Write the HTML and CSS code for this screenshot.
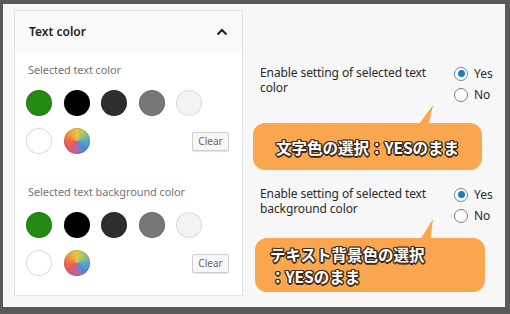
FILE: index.html
```html
<!DOCTYPE html>
<html lang="ja">
<head>
<meta charset="utf-8">
<link rel="stylesheet" href="styles.css">
</head>
<body>
<div class="frame">
  <div class="inner">
    <section class="panel">
      <div class="panel-head">
        <span class="panel-title">Text color</span>
        <svg class="chev" width="12" height="8" viewBox="0 0 12 8"><polyline points="1.5,6.5 6,2 10.5,6.5" fill="none" stroke="#1e1e1e" stroke-width="2"/></svg>
      </div>
      <div class="panel-body">
        <div class="group">
          <div class="label">Selected text color</div>
          <div class="row">
            <span class="sw green"></span><span class="sw black"></span><span class="sw dark"></span><span class="sw gray"></span><span class="sw light"></span>
          </div>
          <div class="row">
            <span class="sw white"></span><span class="sw grad"></span>
            <button class="clear">Clear</button>
          </div>
        </div>
        <div class="group second">
          <div class="label">Selected text background color</div>
          <div class="row">
            <span class="sw green"></span><span class="sw black"></span><span class="sw dark"></span><span class="sw gray"></span><span class="sw light"></span>
          </div>
          <div class="row">
            <span class="sw white"></span><span class="sw grad"></span>
            <button class="clear">Clear</button>
          </div>
        </div>
      </div>
    </section>
    <div class="settings">
      <div class="setting first">
        <div class="setting-text">Enable setting of selected text color</div>
        <div class="radios">
          <div class="radio"><span class="dot on"></span>Yes</div>
          <div class="radio"><span class="dot"></span>No</div>
        </div>
      </div>
      <div class="setting second">
        <div class="setting-text">Enable setting of selected text background color</div>
        <div class="radios">
          <div class="radio"><span class="dot on"></span>Yes</div>
          <div class="radio"><span class="dot"></span>No</div>
        </div>
      </div>
    </div>
    <div class="callout c1">文字色の選択：YESのまま</div>
    <div class="callout c2">テキスト背景色の選択<br>：YESのまま</div>
  </div>
</div>
</body>
</html>
```
FILE: styles.css
```css
* { box-sizing: border-box; }
html, body { margin: 0; padding: 0; }
body {
  width: 510px;
  height: 314px;
  background: #5a5a5a;
  font-family: "Noto Sans", "Open Sans", sans-serif;
  overflow: hidden;
}
.frame {
  padding: 4px 5px 7px 3px;
  height: 314px;
}
.inner {
  position: relative;
  height: 303px;
  background: #f7f7f7;
  display: flex;
  padding: 6px 0 0 11px;
}
.panel {
  width: 229px;
  height: 286px;
  background: #fff;
  border: 1px solid #e3e3e3;
  flex: none;
}
.panel-head {
  height: 41px;
  background: #f9f9f9;
  display: flex;
  align-items: center;
  justify-content: space-between;
  padding: 0 14px 0 14px;
}
.panel-title {
  font-size: 12px;
  font-weight: 600;
  color: #1e1e1e;
}
.chev { display: block; }
.panel-body {
  padding: 10px 13px 0 11px;
}
.label {
  font-size: 11px;
  line-height: 16px;
  color: #757575;
  letter-spacing: -0.1px;
  padding-left: 2px;
}
.row {
  display: flex;
  align-items: center;
  gap: 11.5px;
  margin-top: 12px;
}
.row + .row { margin-top: 12px; }
.group.second { margin-top: 30px; }
.sw {
  width: 26px;
  height: 26px;
  border-radius: 50%;
  flex: none;
  box-shadow: inset 0 0 0 1px rgba(0,0,0,0.12);
}
.sw.green { background: #238a12; }
.sw.black { background: #000; }
.sw.dark { background: #2e2e2e; }
.sw.gray { background: #777; }
.sw.light { background: #f3f3f3; box-shadow: inset 0 0 0 1px #dcdcdc; }
.sw.white { background: #fff; box-shadow: inset 0 0 0 1px #dcdcdc; }
.sw.grad {
  background: conic-gradient(from 0deg, #e9c74a, #9ec36c, #5aa8c9, #4b8bd6, #b06aa8, #e3566a, #ec6d45, #f0a040, #e9c74a);
}
.clear {
  margin-left: auto;
  width: 37px;
  height: 19px;
  padding: 0;
  font-family: inherit;
  font-size: 10px;
  color: #6a6a6a;
  background: #f7f7f7;
  border: 1px solid #cfcfcf;
  border-radius: 2px;
  box-shadow: 0 1px 0 #e6e6e6;
}
.settings {
  flex: 1;
  padding: 55px 0 0 17px;
}
.setting {
  display: flex;
  align-items: flex-start;
}
.setting.second { margin-top: 81px; }
.setting-text {
  width: 182px;
  font-size: 12px;
  line-height: 15px;
  color: #2a2a2a;
  letter-spacing: -0.1px;
}
.radios {
  margin-left: 12px;
  margin-top: -2px;
  display: flex;
  flex-direction: column;
}
.radio {
  display: flex;
  align-items: center;
  height: 21px;
  font-size: 12px;
  color: #2a2a2a;
}
.dot {
  width: 14px;
  height: 14px;
  border-radius: 50%;
  border: 1px solid #7b7b7b;
  background: #fff;
  margin-right: 6px;
  position: relative;
}
.dot.on {
  border-color: #6d8799;
}
.dot.on::after {
  content: "";
  position: absolute;
  left: 2.5px;
  top: 2.5px;
  width: 7px;
  height: 7px;
  border-radius: 50%;
  background: #1f7bb0;
}
.callout {
  position: absolute;
  background: #f9a64f;
  border-radius: 12px;
  color: #fff;
  font-family: "Noto Sans CJK JP", "Noto Sans", sans-serif;
  font-weight: 700;
  font-size: 15.5px;
  text-shadow:
    1.5px 0 0 #3b2a1a, -1.5px 0 0 #3b2a1a, 0 1.5px 0 #3b2a1a, 0 -1.5px 0 #3b2a1a,
    1px 1px 0 #3b2a1a, -1px -1px 0 #3b2a1a, 1px -1px 0 #3b2a1a, -1px 1px 0 #3b2a1a;
}
.callout::before {
  content: "";
  position: absolute;
  background: #f9a64f;
}
.c1 {
  left: 250px;
  top: 119px;
  width: 229px;
  height: 47px;
  display: flex;
  align-items: center;
  justify-content: center;
  line-height: 20px;
}
.c1::before {
  left: 160px;
  top: -19px;
  width: 22px;
  height: 24px;
  clip-path: polygon(3px 24px, 15px 24px, 20px 1px);
}
.c2 {
  left: 252px;
  top: 234px;
  width: 230px;
  height: 54px;
  padding: 5px 0 0 15px;
  line-height: 22px;
}
.c2::before {
  left: 160px;
  top: -20px;
  width: 22px;
  height: 25px;
  clip-path: polygon(3px 25px, 15px 25px, 18px 1px);
}
```
